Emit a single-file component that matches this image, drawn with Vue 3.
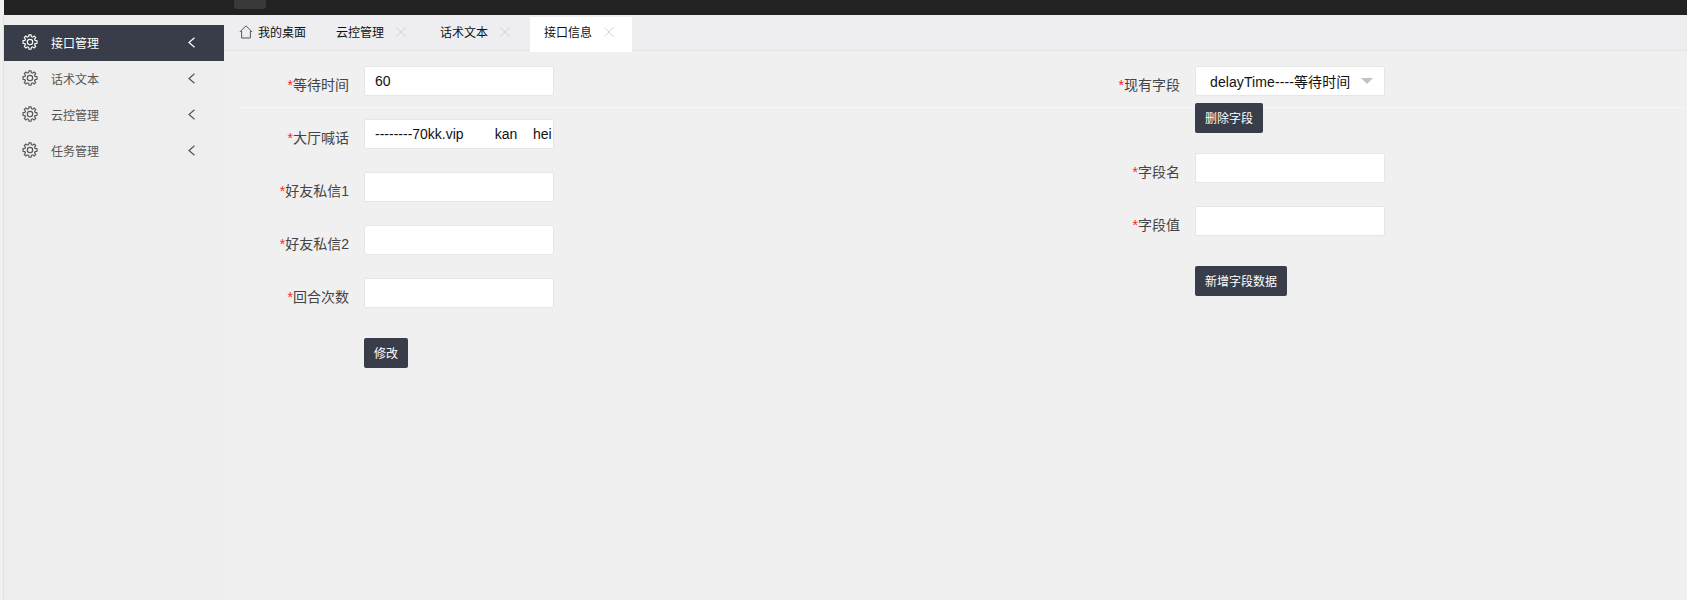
<script setup>
const menus = [
  { name: '接口管理', active: true },
  { name: '话术文本' },
  { name: '云控管理' },
  { name: '任务管理' }
]

const tabs = [
  { name: '云控管理' },
  { name: '话术文本' },
  { name: '接口信息', active: true }
]

const leftFields = [
  { label: '等待时间', value: '60' },
  { label: '大厅喊话', value: '--------70kk.vip        kan    hei    ' },
  { label: '好友私信1', value: '' },
  { label: '好友私信2', value: '' },
  { label: '回合次数', value: '' }
]

const rightFields = [
  { label: '字段名' },
  { label: '字段值' }
]

const gearPath = 'M7 .8h2l.4 1.9 1.2.5 1.6-1.1 1.5 1.5-1.1 1.6.5 1.2 1.9.4v2.4l-1.9.4-.5 1.2 1.1 1.6-1.5 1.5-1.6-1.1-1.2.5-.4 1.9H7l-.4-1.9-1.2-.5-1.6 1.1-1.5-1.5 1.1-1.6-.5-1.2-1.9-.4V6.8l1.9-.4.5-1.2-1.1-1.6 1.5-1.5 1.6 1.1 1.2-.5z'
</script>

<template>
  <div class="page">
    <div class="topbar">
      <div class="top-btn"></div>
    </div>
    <div class="layout">
      <!-- 左侧菜单 -->
      <aside class="sidebar">
        <div
          v-for="item in menus"
          :key="item.name"
          class="menu-item"
          :class="{ active: item.active }"
        >
          <svg class="gear" viewBox="0 0 16 16" fill="none" stroke="currentColor" stroke-width="1.15">
            <path :d="gearPath" />
            <circle cx="8" cy="8" r="2.7" />
          </svg>
          <span class="menu-name">{{ item.name }}</span>
          <svg class="arrow" viewBox="0 0 7 11" fill="none" stroke="currentColor" stroke-width="1.2">
            <path d="M6.5.7 1 5.5l5.5 4.8" />
          </svg>
        </div>
      </aside>

      <main class="main">
        <!-- 标签栏 -->
        <div class="tabbar">
          <div class="tab home">
            <svg class="home-icon" viewBox="0 0 14 14" fill="none" stroke="#555" stroke-width="1">
              <path d="M.8 7 7 .8 13.2 7M2.6 6v7h8.8V6" />
            </svg>
            <span>我的桌面</span>
          </div>
          <div
            v-for="tab in tabs"
            :key="tab.name"
            class="tab"
            :class="{ active: tab.active }"
          >
            <span>{{ tab.name }}</span>
            <svg class="close" viewBox="0 0 10 10" fill="none" stroke="#d2d2d2" stroke-width="1">
              <path d="M.5.5l9 9M9.5.5l-9 9" />
            </svg>
          </div>
        </div>

        <div class="content">
          <div class="divider"></div>

          <form class="form-col">
            <div v-for="field in leftFields" :key="field.label" class="form-row">
              <label class="form-label"><i>*</i>{{ field.label }}</label>
              <input class="form-input" type="text" :value="field.value" />
            </div>
            <div class="form-actions">
              <button type="button" class="btn">修改</button>
            </div>
          </form>

          <form class="form-col">
            <div class="form-row select-row">
              <label class="form-label"><i>*</i>现有字段</label>
              <div class="form-select">
                <span class="select-text">delayTime----等待时间</span>
                <b class="caret"></b>
              </div>
            </div>
            <div class="delete-row">
              <button type="button" class="btn">删除字段</button>
            </div>
            <div v-for="field in rightFields" :key="field.label" class="form-row">
              <label class="form-label"><i>*</i>{{ field.label }}</label>
              <input class="form-input" type="text" />
            </div>
            <div class="form-actions">
              <button type="button" class="btn">新增字段数据</button>
            </div>
          </form>
        </div>
      </main>
    </div>
  </div>
</template>

<style>
html, body {
  margin: 0;
  background: #f0f0f0;
}
</style>

<style scoped>
.page {
  height: 600px;
  padding-left: 4px;
  box-sizing: border-box;
  display: flex;
  flex-direction: column;
  overflow: hidden;
  font-family: "Liberation Sans", "Noto Sans CJK SC", sans-serif;
  color: #333;
  background: #f0f0f0;
}

.topbar {
  height: 15px;
  flex: none;
  background: #222;
  padding-left: 230px;
}

.top-btn {
  width: 32px;
  height: 9px;
  background: #393939;
  border-radius: 0 0 3px 3px;
}

.layout {
  flex: 1;
  display: flex;
  min-height: 0;
}

.sidebar {
  width: 220px;
  flex: none;
  box-sizing: border-box;
  padding-top: 10px;
  background: #eee;
  box-shadow: -1px 0 0 #e2e2e2;
}

.menu-item {
  height: 36px;
  box-sizing: border-box;
  display: flex;
  align-items: center;
  padding: 0 29px 2px 18px;
  font-size: 12px;
  color: #555;
}

.menu-item.active {
  background: #393d49;
  color: #fff;
}

.gear {
  width: 16px;
  height: 16px;
  flex: none;
}

.menu-name {
  flex: 1;
  margin-left: 13px;
}

.arrow {
  width: 7px;
  height: 11px;
  flex: none;
}

.main {
  flex: 1;
  min-width: 0;
  display: flex;
  flex-direction: column;
}

.tabbar {
  height: 36px;
  flex: none;
  box-sizing: border-box;
  display: flex;
  padding-left: 15px;
  background: #eeeef0;
  border-bottom: 1px solid #e4e4e4;
  font-size: 12px;
  color: #111;
}

.tab {
  display: flex;
  align-items: center;
  gap: 12px;
  height: 35px;
  box-sizing: border-box;
  padding: 0 18px 2px 14px;
  margin-right: 2px;
}

.tab.home {
  gap: 5px;
  padding: 0 14px 2px 0;
}

.tab.active {
  margin-top: 2px;
  padding-bottom: 6px;
  background: #fff;
  position: relative;
}

.home-icon {
  width: 14px;
  height: 14px;
}

.close {
  width: 10px;
  height: 10px;
}

.content {
  flex: 1;
  position: relative;
  display: grid;
  grid-template-columns: 831px 1fr;
  padding-top: 15px;
}

.divider {
  position: absolute;
  left: 15px;
  right: 0;
  top: 56px;
  height: 1px;
  background: #f6f6f6;
}

.form-col {
  display: flex;
  flex-direction: column;
  position: relative;
}

.form-row {
  display: flex;
  margin-bottom: 23px;
}

.form-label {
  width: 125px;
  box-sizing: border-box;
  padding-top: 9px;
  text-align: right;
  font-size: 14px;
  line-height: 20px;
  color: #444;
}

.form-label i {
  color: #f22;
  font-style: normal;
}

.form-input,
.form-select {
  width: 190px;
  height: 30px;
  box-sizing: border-box;
  margin: 0 0 0 15px;
  padding: 0 0 0 10px;
  border: 1px solid #e6e6e6;
  border-radius: 2px;
  background: #fff;
  font-family: "Liberation Sans", "Noto Sans CJK SC", sans-serif;
  font-size: 14px;
  color: #111;
  outline: none;
}

.form-select {
  display: flex;
  align-items: center;
  justify-content: space-between;
  padding: 0 11px 0 14px;
}

.select-text {
  letter-spacing: 0.1px;
}

.caret {
  width: 0;
  height: 0;
  border-style: solid;
  border-width: 6px 6px 0;
  border-color: #c2c2c2 transparent transparent;
}

.select-row {
  margin-bottom: 7px;
}

.delete-row {
  margin: 0 0 20px 140px;
}

.form-actions {
  margin: 7px 0 0 140px;
}

.btn {
  display: block;
  height: 30px;
  padding: 0 10px 2px;
  border: none;
  border-radius: 2px;
  background: #393d49;
  color: #fff;
  font-family: "Liberation Sans", "Noto Sans CJK SC", sans-serif;
  font-size: 12px;
}
</style>
